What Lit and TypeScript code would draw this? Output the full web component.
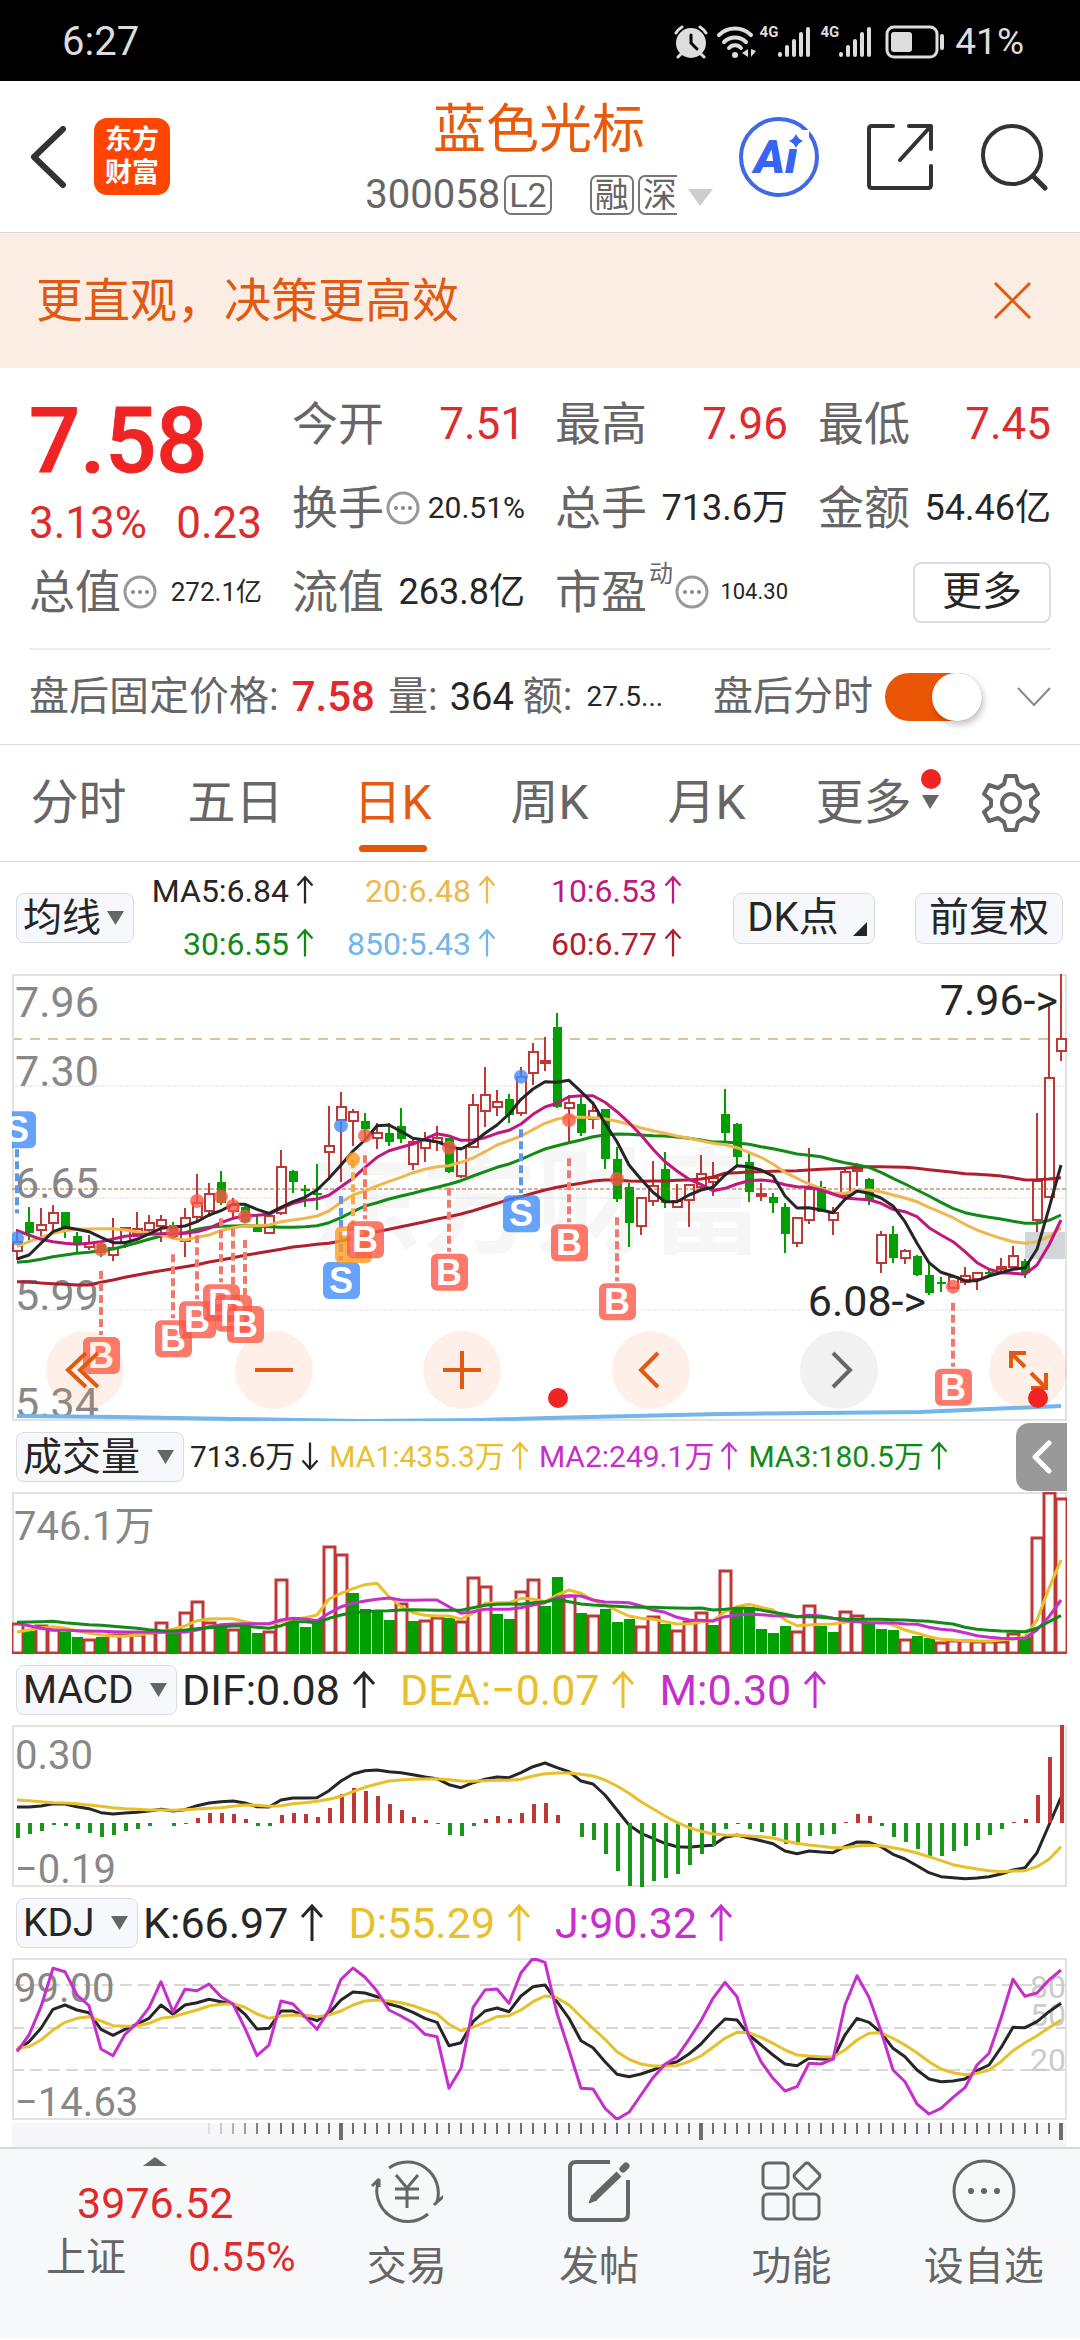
import { LitElement, html, svg, css } from "lit";
import { customElement, property, state } from "lit/decorators.js";

/* ---------- market data, one entry per trading day ---------- */
/* Values are kept in thirds of a drawing unit, counted down from each panel's origin. */

type Candle = [string, number, number, number, number];

const CANDLES: Candle[] = (
  "r 808 845 873 900|g 740 787 820 840|r 745 795 809 830|r 735 759 790 815|g 755 755 802 835|g 815 827 852 875|" +
  "r 825 850 862 870|g 845 852 880 890|r 775 865 885 902|r 803 805 845 865|r 755 807 818 830|r 765 790 810 825|" +
  "r 765 779 797 845|g 785 795 832 835|r 745 773 843 892|r 643 730 770 790|r 668 703 752 772|g 632 667 728 735|" +
  "r 715 735 752 775|g 735 740 785 790|g 765 795 815 815|r 765 768 818 822|r 570 620 760 765|g 630 633 665 700|" +
  "g 675 688 694 740|g 612 700 706 750|r 437 559 577 660|r 396 440 480 665|r 448 456 484 558|g 458 484 508 540|" +
  "r 490 518 534 568|g 490 518 547 558|g 443 498 538 548|r 535 545 612 630|r 515 540 563 605|r 498 535 545 573|" +
  "g 533 533 635 640|r 560 565 648 655|r 402 436 560 560|r 320 405 453 502|r 390 427 440 467|g 402 416 465 490|" +
  "r 320 350 458 467|r 248 277 340 375|r 232 303 310 333|g 160 200 440 445|r 405 430 443 550|g 412 432 518 527|" +
  "r 432 453 478 507|g 448 448 598 626|g 562 597 717 727|g 670 680 790 860|r 712 714 797 825|r 602 678 723 738|" +
  "g 575 627 730 743|r 672 724 740 740|r 672 676 719 800|r 585 641 680 690|r 605 653 667 708|g 387 462 518 543|" +
  "g 490 492 590 615|g 572 605 697 727|r 670 703 709 722|g 700 710 728 758|g 730 740 822 878|r 770 773 850 860|" +
  "r 565 688 780 793|g 663 682 755 757|r 740 760 780 825|r 620 635 705 715|r 608 626 632 678|g 653 658 722 735|" +
  "r 812 825 910 938|g 797 822 893 908|r 868 872 895 912|g 885 888 944 948|g 912 945 1000 1005|g 950 966 972 995|" +
  "r 945 952 983 985|r 920 949 965 975|r 935 939 958 990|g 925 935 941 950|r 893 921 927 935|r 858 887 922 925|" +
  "g 898 903 940 953|r 458 662 780 815|r 135 354 710 712|r 42 237 273 302"
)
  .split("|")
  .map((row) => {
    const [kind, ...v] = row.split(" ");
    return [kind, ...v.map((n) => Math.round(Number(n) / 3))] as Candle;
  });

const MA5 = [897, 885, 850, 815, 802, 808, 815, 832, 848, 848, 838, 822, 805, 802, 798, 785, 765, 752, 733, 733, 748, 760, 742, 725, 712, 690, 655, 615, 573, 540, 497, 495, 514, 535, 540, 545, 560, 567, 548, 520, 495, 462, 418, 387, 365, 367, 361, 395, 430, 490, 545, 615, 658, 697, 725, 725, 705, 690, 682, 645, 617, 620, 630, 648, 708, 744, 743, 750, 758, 718, 693, 700, 714, 738, 785, 850, 908, 937, 948, 962, 962, 948, 938, 928, 923, 868, 745, 615];
const MA10 = [812, 825, 838, 845, 850, 853, 850, 845, 837, 829, 826, 823, 821, 820, 820, 815, 805, 788, 775, 768, 766, 763, 745, 730, 721, 717, 706, 680, 655, 622, 592, 572, 562, 552, 537, 521, 528, 541, 540, 533, 520, 511, 492, 463, 441, 430, 410, 407, 407, 427, 455, 488, 525, 568, 605, 633, 658, 673, 692, 685, 672, 662, 660, 664, 674, 680, 682, 690, 702, 714, 717, 719, 730, 748, 755, 770, 803, 825, 845, 875, 908, 928, 938, 940, 943, 915, 855, 780];
const MA20 = [860, 845, 832, 820, 812, 808, 807, 806, 806, 810, 815, 820, 824, 835, 840, 832, 825, 812, 803, 798, 797, 795, 785, 780, 775, 768, 753, 727, 705, 693, 678, 664, 652, 638, 628, 620, 617, 607, 594, 575, 555, 542, 528, 509, 490, 477, 471, 472, 473, 476, 484, 493, 504, 512, 520, 528, 535, 542, 550, 554, 563, 577, 592, 612, 637, 655, 672, 685, 700, 700, 693, 690, 695, 705, 714, 725, 742, 757, 773, 793, 810, 823, 835, 845, 850, 845, 830, 803];
const MA30 = [907, 904, 898, 890, 885, 880, 877, 872, 867, 858, 848, 838, 828, 824, 818, 808, 802, 799, 798, 797, 798, 800, 802, 802, 800, 797, 788, 773, 755, 738, 728, 717, 708, 700, 690, 682, 673, 662, 648, 635, 622, 612, 598, 582, 567, 557, 548, 540, 530, 525, 522, 523, 525, 527, 528, 531, 535, 540, 546, 546, 549, 553, 560, 566, 574, 582, 586, 590, 600, 608, 615, 622, 637, 655, 672, 690, 708, 727, 745, 758, 766, 772, 777, 784, 790, 790, 781, 765];
const MA60 = [965, 966, 969, 971, 973, 975, 975, 967, 960, 952, 945, 938, 932, 926, 920, 914, 906, 900, 893, 886, 880, 874, 868, 861, 857, 853, 850, 843, 833, 822, 815, 808, 800, 793, 785, 777, 770, 762, 752, 741, 730, 718, 710, 700, 690, 682, 676, 670, 663, 660, 660, 663, 664, 663, 663, 661, 660, 657, 651, 640, 638, 636, 635, 634, 633, 632, 630, 628, 626, 625, 622, 620, 620, 621, 622, 625, 629, 633, 637, 641, 643, 645, 648, 653, 660, 659, 657, 653];

const VOLUME =
  "r613 g632 r617 r630 g635 g650 r661 g650 r645 r645 r645 r640 r609 g635 r578 r546 r610 g618 r630 g622 g638 r637 " +
  "r481 g603 g622 g597 r381 r405 g520 g568 g570 g600 r552 g602 r604 r595 g593 r606 r474 r500 g582 g597 r516 r481 " +
  "g557 g472 r527 g580 r587 g567 g606 g598 r622 r592 g612 r633 r605 r579 g615 r454 g560 g562 g628 g640 g617 r636 " +
  "r559 g617 g637 r576 r588 g613 g627 g630 r661 g648 g654 r669 r664 r664 r667 r667 r665 r641 g650 r354 r219 r238";

const VMA1 = [636, 630, 624, 620, 624, 632, 640, 645, 648, 649, 645, 640, 635, 628, 618, 602, 597, 596, 596, 605, 612, 612, 605, 598, 593, 585, 537, 520, 506, 494, 490, 530, 560, 578, 586, 588, 588, 597, 580, 550, 548, 548, 535, 537, 545, 525, 510, 520, 540, 555, 572, 588, 595, 597, 605, 612, 612, 606, 602, 575, 560, 553, 562, 570, 600, 617, 615, 613, 612, 607, 600, 605, 603, 615, 630, 640, 650, 658, 660, 662, 663, 664, 660, 657, 650, 600, 505, 420];
const VMA2 = [610, 617, 625, 630, 631, 632, 633, 634, 635, 636, 636, 637, 637, 637, 636, 630, 620, 614, 612, 611, 611, 611, 600, 595, 597, 602, 580, 560, 550, 543, 538, 534, 540, 541, 540, 540, 560, 580, 575, 568, 568, 568, 563, 555, 548, 532, 528, 528, 540, 546, 547, 548, 558, 570, 577, 592, 600, 601, 603, 590, 585, 583, 584, 587, 588, 590, 586, 588, 595, 602, 605, 608, 609, 608, 612, 613, 622, 628, 631, 638, 647, 652, 655, 656, 655, 630, 590, 540];
const VMA3 = [607, 606, 605, 604, 608, 611, 614, 616, 619, 622, 625, 629, 632, 633, 630, 626, 623, 620, 618, 618, 622, 625, 617, 605, 605, 608, 595, 585, 578, 575, 573, 572, 570, 569, 570, 571, 571, 571, 563, 556, 553, 552, 553, 548, 545, 538, 545, 552, 555, 557, 559, 561, 562, 562, 563, 564, 565, 564, 570, 568, 565, 565, 570, 577, 583, 590, 590, 592, 595, 597, 598, 598, 598, 599, 600, 602, 604, 608, 612, 622, 628, 631, 633, 634, 635, 625, 605, 587];

const MACD = [415, 403, 392, 374, 377, 388, 398, 410, 404, 392, 386, 377, 370, 377, 372, 355, 340, 340, 343, 358, 377, 377, 346, 340, 343, 351, 325, 283, 265, 274, 289, 313, 331, 351, 361, 372, 404, 407, 377, 358, 349, 358, 340, 313, 310, 346, 370, 410, 419, 461, 512, 558, 560, 542, 533, 521, 494, 461, 437, 386, 372, 386, 395, 407, 431, 434, 407, 404, 401, 367, 343, 349, 377, 410, 425, 446, 467, 467, 452, 437, 419, 404, 386, 365, 358, 286, 170, 75];
const DIF = [321, 321, 318, 311, 312, 320, 326, 338, 342, 339, 337, 333, 328, 333, 329, 317, 309, 305, 303, 309, 320, 321, 300, 294, 294, 293, 272, 243, 222, 212, 210, 215, 218, 224, 231, 236, 254, 263, 248, 238, 231, 233, 218, 200, 189, 203, 215, 243, 252, 285, 330, 375, 400, 415, 430, 440, 442, 438, 436, 412, 405, 414, 422, 431, 453, 461, 453, 456, 458, 440, 426, 427, 440, 463, 477, 497, 518, 530, 533, 536, 534, 530, 522, 510, 503, 458, 375, 292];
const DEA = [300, 302, 305, 308, 309, 311, 315, 319, 323, 326, 328, 330, 330, 331, 329, 327, 325, 323, 319, 315, 316, 319, 317, 311, 308, 304, 298, 289, 275, 262, 252, 243, 240, 238, 237, 236, 239, 243, 244, 242, 241, 241, 238, 228, 221, 219, 219, 223, 228, 240, 258, 280, 305, 326, 348, 367, 383, 394, 402, 405, 406, 408, 410, 414, 423, 430, 435, 439, 443, 443, 438, 436, 437, 443, 450, 459, 470, 482, 494, 501, 507, 512, 515, 513, 512, 500, 478, 440];

const J = [1055, 1005, 920, 805, 815, 885, 917, 1047, 1067, 1003, 970, 923, 845, 935, 868, 872, 852, 890, 912, 985, 1067, 1035, 903, 912, 950, 988, 930, 838, 804, 832, 873, 930, 948, 968, 1003, 1010, 1165, 1105, 923, 870, 867, 910, 818, 775, 787, 940, 1050, 1165, 1167, 1225, 1258, 1237, 1185, 1133, 1093, 1070, 1018, 962, 895, 847, 890, 1010, 1085, 1135, 1173, 1160, 1090, 1092, 1077, 915, 827, 892, 993, 1110, 1145, 1212, 1242, 1225, 1192, 1163, 1095, 1060, 955, 838, 889, 879, 840, 810];
const K = [1050, 1025, 985, 928, 915, 930, 938, 988, 1006, 988, 972, 955, 915, 943, 915, 908, 898, 905, 912, 943, 987, 985, 933, 933, 950, 962, 940, 900, 876, 879, 890, 912, 922, 937, 955, 967, 1037, 1028, 965, 933, 924, 935, 888, 860, 855, 905, 955, 1022, 1043, 1085, 1123, 1130, 1122, 1110, 1095, 1085, 1062, 1032, 992, 957, 960, 1005, 1035, 1065, 1092, 1097, 1075, 1077, 1077, 1005, 955, 967, 998, 1045, 1070, 1110, 1137, 1145, 1143, 1137, 1112, 1095, 1043, 982, 983, 965, 935, 910];
const D = [1043, 1040, 1020, 990, 967, 955, 950, 963, 977, 979, 978, 970, 955, 950, 940, 930, 918, 913, 911, 922, 942, 955, 948, 945, 946, 950, 945, 933, 915, 903, 900, 903, 908, 917, 930, 942, 973, 992, 982, 966, 950, 947, 930, 905, 888, 893, 915, 950, 985, 1018, 1055, 1078, 1092, 1098, 1098, 1097, 1085, 1068, 1042, 1015, 997, 998, 1012, 1030, 1050, 1065, 1068, 1070, 1071, 1050, 1020, 1000, 998, 1015, 1035, 1058, 1085, 1107, 1118, 1124, 1120, 1110, 1085, 1052, 1028, 1007, 983, 960];

/* Trade signals: kind, day index, dot level, badge level. */
const SIGNALS: [string, number, number, number][] = [
  ["S", 0, 835, 508], ["B", 7, 868, 1185], ["B", 13, 815, 1135], ["B", 15, 723, 1078],
  ["B", 17, 710, 1027], ["B", 18, 738, 1058], ["B", 19, 770, 1092], ["S", 27, 497, 960],
  ["T", 28, 598, 853], ["B", 29, 527, 838], ["B", 36, 563, 935], ["S", 42, 350, 760],
  ["B", 46, 480, 847], ["B", 50, 657, 1024], ["B", 78, 980, 1280],
];

const RED = "#c03835";
const GREEN = "#00a000";
const dayX = (i: number) => 17 + 12 * i;
const line = (values: number[], color: string, width = 3) =>
  svg`<polyline fill="none" stroke=${color} stroke-width=${width} stroke-linejoin="round"
    points=${values.map((v, i) => `${dayX(i)},${(v / 3).toFixed(1)}`).join(" ")} />`;
const frame = (top: number, height: number) =>
  svg`<rect x="13" y=${top + 1} width="1053" height=${height - 2} fill="none" stroke="#e2e2e2" stroke-width="2" />`;

/* ---------- charts ---------- */

abstract class ChartBase extends LitElement {
  static styles = css`
    :host { display: block; }
    svg { display: block; width: 100%; height: auto; }
    text { font-family: Roboto, "Noto Sans CJK SC", sans-serif; }
    .axis { fill: #888; font-size: 43px; }
    .axis-small { fill: #888; font-size: 40px; }
    .level { fill: #ccc; font-size: 32px; }
    .extreme { fill: #262626; font-size: 43px; }
    .badge { fill: #fff; font-size: 36px; font-weight: 700; font-family: "Liberation Sans", sans-serif; }
    .mark { fill: #f6f6f6; font-size: 114px; font-weight: 700; }
  `;
}

@customElement("price-chart")
export class PriceChart extends ChartBase {
  private candle([kind, high, top, bottom, low]: Candle, i: number) {
    const x = dayX(i);
    const c = kind === "r" ? RED : GREEN;
    const height = Math.max(2, bottom - top);
    if (kind === "g")
      return svg`<path d=${`M${x} ${high}V${low}`} stroke=${c} stroke-width="2" />
        <rect x=${x - 4} y=${top} width="9" height=${height} fill=${c} />`;
    return svg`<path d=${`M${x} ${high}V${top}M${x} ${bottom}V${low}`} stroke=${c} stroke-width="2" />
      <rect x=${x - 4} y=${top} width="9" height=${height} fill="none" stroke=${c} stroke-width="2" />`;
  }

  private signal([kind, day, dot, badge]: [string, number, number, number]) {
    const x = dayX(day);
    const by = badge / 3;
    const c = kind === "B" ? "#fb5846" : kind === "S" ? "#3f8cfb" : "#ff9a1f";
    const dashColor = kind === "B" ? "#ef7b6f" : kind === "S" ? "#5b9ae8" : "#f2ad50";
    const below = badge > dot;
    const from = below ? by - 84 : by + 20;
    return svg`<path d=${`M${x} ${from}v64`} stroke=${dashColor} stroke-width="4" stroke-dasharray="8 4" />
      <circle cx=${x} cy=${dot / 3} r="7" fill=${c} opacity="0.8" />
      <rect x=${x - 18} y=${by - 18} width="37" height="37" rx="6" fill=${c} opacity="0.8" />
      <text class="badge" x=${x} y=${by + 13} text-anchor="middle">${kind}</text>`;
  }

  render() {
    return html`<svg viewBox="12 14 1055 447" role="img" aria-label="日K线图">
      <text class="mark" x="308" y="284">东方财富</text>
      <rect x="1025" y="272" width="42" height="27" fill="#d2d5da" />
      <path d="M12 126H1067M12 238H1067M12 350H1067" stroke="#ddd" stroke-width="1" stroke-dasharray="2 1" />
      <path d="M12 79H1067" stroke="#e2c19a" stroke-width="2" stroke-dasharray="10 8" />
      ${frame(14, 447)}
      ${[["7.96", 57], ["7.30", 126], ["6.65", 238], ["5.99", 350], ["5.34", 458]].map(
        ([t, y]) => svg`<text class="axis" x="15" y=${y}>${t}</text>`,
      )}
      ${CANDLES.map((c, i) => this.candle(c, i))}
      <path d="M12 229H1067" stroke="#b0622c" stroke-width="1" stroke-dasharray="4 2" />
      ${line(MA60, "#b0202c")} ${line(MA30, "#128a17")} ${line(MA20, "#efb84e")}
      ${line(MA10, "#c0187e")} ${line(MA5, "#262626")}
      <polyline fill="none" stroke="#72b6ea" stroke-width="4"
        points="17,456 117,457 233,459 360,461 480,460 547,458 720,454 920,452 1061,446" />
      ${SIGNALS.map((s) => this.signal(s))}
      <text class="extreme" x="1058" y="55" text-anchor="end">7.96-&gt;</text>
      <text class="extreme" x="926" y="356" text-anchor="end">6.08-&gt;</text>
    </svg>`;
  }
}

@customElement("volume-chart")
export class VolumeChart extends ChartBase {
  render() {
    return html`<svg viewBox="12 72 1055 162" role="img" aria-label="成交量图">
      ${frame(72, 162)}
      <text class="axis-small" x="14" y="120">746.1万</text>
      ${VOLUME.split(" ").map((bar, i) => {
        const y = Math.round(Number(bar.slice(1)) / 3);
        return bar[0] === "r"
          ? svg`<rect x=${dayX(i) - 5} y=${y} width="11" height=${233 - y} fill="#fff" stroke=${RED} stroke-width="3" />`
          : svg`<rect x=${dayX(i) - 5} y=${y} width="11" height=${234 - y} fill=${GREEN} />`;
      })}
      ${line(VMA1, "#e8c02c")} ${line(VMA2, "#c62fcb")} ${line(VMA3, "#128a17")}
    </svg>`;
  }
}

@customElement("macd-chart")
export class MacdChart extends ChartBase {
  render() {
    return html`<svg viewBox="12 25 1055 162" role="img" aria-label="MACD图">
      ${frame(25, 162)}
      <text class="axis-small" x="15" y="69">0.30</text>
      <text class="axis-small" x="15" y="183">−0.19</text>
      ${line(DIF, "#262626")}
      ${MACD.map((v, i) => svg`<path d=${`M${dayX(i) + 1} 123V${Math.round(v / 3)}`} stroke-width="4"
        stroke=${v < 370 ? RED : "#1a971a"} />`)}
      ${line(DEA, "#e8c02c")}
    </svg>`;
  }
}

@customElement("kdj-chart")
export class KdjChart extends ChartBase {
  render() {
    return html`<svg viewBox="12 258 1055 162" role="img" aria-label="KDJ图">
      <path d="M12 285H1067M12 328H1067M12 370H1067" stroke="#d8d8d8" stroke-width="2" stroke-dasharray="12 6" />
      ${frame(258, 162)}
      <text class="axis-small" x="14" y="302">99.00</text>
      <text class="axis-small" x="15" y="416">−14.63</text>
      <text class="level" x="1066" y="298" text-anchor="end">80</text>
      <text class="level" x="1066" y="326" text-anchor="end">50</text>
      <text class="level" x="1066" y="371" text-anchor="end">20</text>
      ${line(K, "#262626")} ${line(D, "#e8c02c")} ${line(J, "#c62fcb")}
    </svg>`;
  }
}

@customElement("day-ruler")
export class DayRuler extends ChartBase {
  render() {
    return html`<svg viewBox="12 0 1055 24" aria-hidden="true">
      ${CANDLES.map((_, i) => {
        if (i < 16) return null;
        const major = i % 30 === 27;
        return svg`<path d=${`M${dayX(i)} 0v${major ? 17 : 11}`} stroke="#6e6e6e"
          stroke-width=${major ? 4 : 2} opacity=${Math.min(1, (i - 15) / 6)} />`;
      })}
    </svg>`;
  }
}

/* ---------- small shared parts ---------- */

@customElement("pick-menu")
export class PickMenu extends LitElement {
  @property() value = "";
  @property() label = "";
  @property({ type: Boolean, reflect: true }) tight = false;

  static styles = css`
    :host { display: block; flex: none; }
    .box { display: flex; position: relative; align-items: center; }
    select {
      appearance: none; height: 50px; margin: 0; padding: 0 42px 0 6px;
      border: 1px solid #d9dce0; border-radius: 8px; background: #f6f8fb; color: #262626;
      font: 39px/48px Roboto, "Noto Sans CJK SC", sans-serif;
    }
    :host([tight]) select { padding-right: 31px; }
    svg { position: absolute; right: 10px; width: 17px; height: 14px; pointer-events: none; }
  `;

  render() {
    return html`<label class="box">
      <select aria-label=${this.label}><option>${this.value}</option></select>
      <svg viewBox="0 0 17 14"><path d="M0 0h17l-8.500 14z" fill="#666" /></svg>
    </label>`;
  }
}

const moreDots = html`<svg class="dots" viewBox="0 0 34 34">
  <circle cx="17" cy="17" r="15" fill="none" stroke="#999" stroke-width="3" />
  <circle cx="10" cy="17" r="2" fill="#888" /><circle cx="17" cy="17" r="2" fill="#888" /><circle cx="24" cy="17" r="2" fill="#888" />
</svg>`;

const signalBars = html`<svg class="bars" viewBox="0 0 34 32">
  <path d="M2 28v1M9 21v8M16 15v14M23 8v21M30 3v26" stroke="#ddd" stroke-width="4" stroke-linecap="round" />
</svg>`;

/* ---------- page ---------- */

@customElement("app-root")
export class AppRoot extends LitElement {
  @state() private tab = "日K";
  @state() private bannerOpen = true;

  static styles = css`
    :host { display: block; background: #fff; color: #262626; font-family: Roboto, "Noto Sans CJK SC", sans-serif; }
    * { box-sizing: border-box; }
    button { margin: 0; padding: 0; border: 0; background: none; color: inherit; font: inherit; cursor: pointer; }
    a { color: inherit; text-decoration: none; }
    svg { display: block; flex: none; }
    dl, dd, dt, h1, p { margin: 0; font-weight: 400; }
    .red { color: #de2c2e; }

    .status { display: flex; align-items: center; height: 81px; padding: 3px 56px 0 62px; background: #000; color: #ddd; }
    .time { flex: 1; font-size: 40px; line-height: 50px; }
    .status-icons { display: flex; align-items: center; }
    .alarm { width: 34px; height: 34px; margin-right: 8px; }
    .wifi { width: 40px; height: 34px; margin-right: 4px; }
    .net { align-self: flex-start; margin-top: 6px; font-size: 15px; line-height: 18px; font-weight: 700; }
    .bars { width: 34px; height: 32px; margin-right: 8px; }
    .battery { width: 60px; height: 34px; margin: 0 10px 0 4px; }
    .percent { font-size: 37px; line-height: 50px; }

    .header { display: grid; grid-template-columns: 1fr auto 1fr; align-items: center; height: 152px; padding: 0 32px 0 30px; border-bottom: 1px solid #d6d6d8; }
    .lead { display: flex; align-items: center; gap: 28px; }
    .back { width: 36px; height: 62px; }
    .logo { display: flex; flex-direction: column; align-items: center; justify-content: center; width: 76px; height: 77px; border-radius: 13px; background: #ff4500; color: #fff; font-size: 27px; line-height: 33px; font-weight: 700; }
    .title { display: flex; flex-direction: column; align-items: center; padding-top: 7px; }
    .name { color: #e85a0c; font-size: 53px; line-height: 70px; }
    .code { display: flex; align-items: center; height: 60px; color: #666; font-size: 40px; line-height: 60px; }
    .tag { height: 40px; margin-left: 4px; padding: 0 3px; border: 2px solid #777; border-radius: 7px; font-size: 34px; line-height: 36px; }
    .tag-gap { margin-left: 38px; }
    .tag-open { border-right: 0; border-radius: 7px 0 0 7px; padding-right: 0; }
    .caret { width: 25px; height: 17px; margin: 4px 0 0 11px; }
    .tools { display: flex; align-items: center; justify-content: flex-end; gap: 46px; }
    .ai { width: 82px; height: 82px; }
    .tool { width: 68px; height: 68px; }
    .ai-text { font: italic 900 47px Roboto, sans-serif; fill: #3565f2; }

    .banner { display: flex; align-items: center; justify-content: space-between; height: 135px; padding: 0 48px 0 36px; background: #fcede4; color: #df5a12; font-size: 47px; line-height: 60px; }
    .close { width: 39px; height: 39px; }

    .quote { padding: 14px 29px 0; border-bottom: 1px solid #dcdcdc; }
    .grid { display: grid; grid-template-columns: repeat(4, 1fr); grid-template-rows: repeat(3, 84px); column-gap: 30px; align-items: center; }
    .headline { grid-row: span 2; display: flex; flex-direction: column; gap: 3px; align-self: stretch; padding-top: 12px; }
    .price { color: #f02424; font-size: 90px; line-height: 96px; font-weight: 500; -webkit-text-stroke: 1px #f02424; }
    .change { display: flex; justify-content: space-between; font-size: 44px; line-height: 60px; }
    .stat { display: flex; align-items: center; justify-content: space-between; color: #666; font-size: 46px; line-height: 60px; white-space: nowrap; }
    .stat dt { display: flex; align-items: center; gap: 2px; }
    .stat dd { font-size: 44px; color: #262626; }
    .stat dd.red { color: #de2c2e; }
    .stat dd.v36 { font-size: 36px; }
    .stat dd.v30 { font-size: 30px; }
    .stat dd.v26 { font-size: 26px; }
    .stat dd.v22 { font-size: 22px; }
    .dots { width: 34px; height: 34px; }
    .sup { align-self: flex-start; font-size: 24px; line-height: 24px; }
    .more { justify-self: end; width: 138px; height: 61px; border: 2px solid #ddd; border-radius: 8px; font-size: 40px; line-height: 56px; }
    .after { display: flex; align-items: center; height: 96px; margin-top: 14px; border-top: 2px solid #eee; color: #666; font-size: 40px; line-height: 60px; white-space: nowrap; }
    .after b { font-weight: 500; font-size: 42px; margin: 0 13px; }
    .after .qty { font-size: 38px; font-weight: 400; color: #262626; margin: 0 9px 0 12px; }
    .after .amt { flex: 1; font-size: 28px; color: #262626; margin-left: 14px; }
    .switch { display: flex; align-items: center; gap: 12px; }
    .switch input { appearance: none; display: flex; justify-content: flex-end; width: 97px; height: 48px; margin: 0; border-radius: 24px; background: #e95504; }
    .switch input::before { content: ""; width: 50px; height: 48px; border-radius: 24px; background: #fff; box-shadow: 2px 4px 6px rgb(0 0 0 / 22%); }
    .switch input:not(:checked) { justify-content: flex-start; background: #ccc; }
    .expand { width: 34px; height: 20px; margin-left: 35px; }

    .tabs { display: grid; grid-template-columns: repeat(6, 157fr) 138fr; height: 117px; border-bottom: 1px solid #d6d6d6; color: #666; font-size: 48px; line-height: 60px; }
    .tab { position: relative; display: flex; align-items: center; justify-content: center; }
    .tab.on { color: #e35a10; }
    .tab.on::after { content: ""; position: absolute; bottom: 9px; width: 68px; height: 7px; border-radius: 4px; background: #e65608; }
    .tab-caret { position: absolute; right: 3px; top: 50px; width: 17px; height: 14px; }
    .new { position: absolute; width: 20px; height: 20px; border-radius: 10px; background: #f02424; }
    .tab .new { right: 1px; top: 24px; }
    .gear { width: 60px; height: 60px; }

    .panel { padding: 0 13px 0 12px; }
    .averages { display: flex; align-items: center; height: 112px; padding: 0 4px; }
    .ma { flex: none; display: grid; grid-template-columns: 162px 182px 186px; justify-items: end; margin: 0 auto 0 19px; font-size: 32px; line-height: 53px; }
    .ma span, .values span { white-space: nowrap; }
    .ma .up { width: 20px; height: 30px; margin-left: 6px; vertical-align: -3px; }
    .up { display: inline-block; }
    .chip { position: relative; height: 51px; border: 1px solid #d9dce0; border-radius: 8px; background: #f6f8fb; font-size: 40px; line-height: 48px; }
    .dk { width: 142px; padding-right: 22px; margin-right: 40px; }
    .dk svg { position: absolute; right: 7px; bottom: 7px; width: 14px; height: 14px; }
    .adjust { width: 148px; }

    .stage { position: relative; }
    .controls { position: absolute; left: 34px; right: 0; bottom: 12px; display: flex; justify-content: space-between; }
    .round { position: relative; width: 78px; height: 78px; border-radius: 39px; background: rgb(248 136 80 / 13%); }
    .round.off { background: rgb(120 120 120 / 10%); }
    .round svg { width: 78px; height: 78px; }
    .hint-plus { left: 125px; top: 57px; }
    .hint-full { left: 39px; top: 57px; }

    .values { display: flex; align-items: center; gap: 24px; height: 71px; padding: 0 0 0 4px; }
    .values .first { margin-left: -19px; }
    .wide { font-size: 43px; line-height: 60px; }
    .wide .up { width: 24px; height: 40px; margin-left: 12px; vertical-align: -5px; }
    .narrow { gap: 10px; font-size: 30px; line-height: 60px; }
    .narrow .first { margin-left: -4px; }
    .narrow .up { width: 18px; height: 38px; margin-left: 6px; vertical-align: -8px; }
    .drawer { display: flex; align-items: center; justify-content: center; width: 51px; height: 68px; margin-left: auto; border-radius: 13px 0 0 13px; background: #999; }
    .drawer svg { width: 22px; height: 34px; }
    .black { color: #262626; } .yellow { color: #e8c02c; } .purple { color: #c62fcb; } .green { color: #128a17; }
    .amber { color: #efb84e; } .pink { color: #c0187e; } .sky { color: #72b6ea; } .wine { color: #b0202c; }
    .ruler { margin-top: 3px; background: #f7f7fa; }

    .footer { display: grid; grid-template-columns: 310fr repeat(4, 192fr); min-height: 192px; border-top: 2px solid #d6d9dc; background: #f6f8fa; color: #666; }
    .index { display: flex; flex-direction: column; align-items: center; padding-top: 8px; }
    .index svg { width: 24px; height: 9px; }
    .points { font-size: 43px; line-height: 56px; margin-top: 9px; }
    .row { display: flex; align-items: center; justify-content: space-between; align-self: stretch; padding: 0 15px 0 46px; font-size: 40px; line-height: 54px; }
    .nav { display: flex; flex-direction: column; align-items: center; padding-top: 6px; font-size: 40px; line-height: 56px; gap: 12px; }
    .nav svg { width: 72px; height: 72px; }
  `;

  private up(down = false) {
    return html`<svg class="up" viewBox="0 0 24 40" role="img" aria-label=${down ? "下降" : "上升"}>
      <path d=${down ? "M12 2v35M2 26l10 11 10-11" : "M12 38V3M2 14L12 3l10 11"} fill="none" stroke="currentColor" stroke-width="3" />
    </svg>`;
  }

  private stat(name: string, value: string, cls: string, dots = false, sup = "") {
    return html`<div class="stat">
      <dt>${name}${sup ? html`<span class="sup">${sup}</span>` : null}${dots ? moreDots : null}</dt>
      <dd class=${cls}>${value}</dd>
    </div>`;
  }

  private round(label: string, path: string, extra: unknown = null, off = false) {
    return html`<button class=${off ? "round off" : "round"} aria-label=${label}>
      <svg viewBox="0 0 78 78"><path d=${path} fill="none" stroke=${off ? "#666" : "#e05a12"} stroke-width="4" /></svg>${extra}
    </button>`;
  }

  private renderStatus() {
    return html`<div class="status">
      <span class="time">6:27</span>
      <div class="status-icons">
        <svg class="alarm" viewBox="0 0 34 34">
          <circle cx="17" cy="18" r="15" fill="#ddd" />
          <path d="M2 8a18 18 0 0 1 6-6M32 8a18 18 0 0 0-6-6M7 29l-3 3M27 29l3 3" stroke="#ddd" stroke-width="3" fill="none" stroke-linecap="round" />
          <path d="M17 10v8l6 6" stroke="#000" stroke-width="3" fill="none" stroke-linecap="round" />
        </svg>
        <svg class="wifi" viewBox="0 0 40 34">
          <path d="M3 10a23 23 0 0 1 32 0M8 17a16 16 0 0 1 22 0M13 23a8 8 0 0 1 12 0" stroke="#ddd" stroke-width="4" fill="none" stroke-linecap="round" />
          <circle cx="19" cy="30" r="3" fill="#ddd" />
          <path d="M32 24v8l-6-4zM35 24v8l5-6z" fill="#ddd" />
        </svg>
        <span class="net">4G</span>${signalBars}<span class="net">4G</span>${signalBars}
        <svg class="battery" viewBox="0 0 60 34">
          <rect x="2" y="2" width="50" height="30" rx="7" fill="none" stroke="#ddd" stroke-width="3" />
          <rect x="6" y="7" width="21" height="20" rx="3" fill="#ddd" />
          <path d="M57 11v12" stroke="#ddd" stroke-width="4" stroke-linecap="round" />
        </svg>
        <span class="percent">41%</span>
      </div>
    </div>`;
  }

  private renderHeader() {
    return html`<header class="header">
      <div class="lead">
        <button aria-label="返回"><svg class="back" viewBox="0 0 36 62"><path d="M33 3L4 31l29 28" fill="none" stroke="#333" stroke-width="6" stroke-linecap="round" stroke-linejoin="round" /></svg></button>
        <a class="logo" href="#home"><span>东方</span><span>财富</span></a>
      </div>
      <div class="title">
        <h1 class="name">蓝色光标</h1>
        <div class="code">300058<span class="tag">L2</span><span class="tag tag-gap">融</span><span class="tag tag-open">深</span>
          <svg class="caret" viewBox="0 0 25 17"><path d="M0 0h25L12 17z" fill="#ccc" /></svg></div>
      </div>
      <div class="tools">
        <button aria-label="智能助手"><svg class="ai" viewBox="0 0 82 82">
          <circle cx="41" cy="41" r="38" fill="none" stroke="#4069e4" stroke-width="4" />
          <text class="ai-text" x="16" y="57">Ai</text>
          <path d="M49 14h22v19H49z" fill="#fff" />
          <path d="M58 18q2 5 7 7q-5 2-7 7q-2-5-7-7q5-2 7-7z" fill="#3565f2" />
        </svg></button>
        <button aria-label="分享"><svg class="tool" viewBox="0 0 68 68" fill="none" stroke="#333" stroke-width="4" stroke-linecap="round" stroke-linejoin="round">
          <path d="M27 3H6q-3 0-3 3v56q0 3 3 3h56q3 0 3-3V43M43 3h22v23M65 3L34 37" />
        </svg></button>
        <button aria-label="搜索"><svg class="tool" viewBox="0 0 68 68" fill="none" stroke="#333" stroke-width="4" stroke-linecap="round">
          <circle cx="32" cy="32" r="29" /><path d="M53 53l12 12" stroke-width="5" />
        </svg></button>
      </div>
    </header>`;
  }

  private renderQuote() {
    return html`<section class="quote">
      <dl class="grid">
        <div class="headline">
          <p class="price">7.58</p>
          <p class="change red"><span>3.13%</span><span>0.23</span></p>
        </div>
        ${this.stat("今开", "7.51", "red")} ${this.stat("最高", "7.96", "red")} ${this.stat("最低", "7.45", "red")}
        ${this.stat("换手", "20.51%", "v30", true)} ${this.stat("总手", "713.6万", "v36")} ${this.stat("金额", "54.46亿", "v36")}
        ${this.stat("总值", "272.1亿", "v26", true)} ${this.stat("流值", "263.8亿", "v36")} ${this.stat("市盈", "104.30", "v22", true, "动")}
        <button class="more">更多</button>
      </dl>
      <div class="after">
        盘后固定价格:<b class="red">7.58</b>量:<span class="qty">364</span>额:<span class="amt">27.5...</span>
        <label class="switch">盘后分时<input type="checkbox" checked /></label>
        <button aria-label="展开"><svg class="expand" viewBox="0 0 34 20"><path d="M1 1l16 17L33 1" fill="none" stroke="#888" stroke-width="2" /></svg></button>
      </div>
    </section>`;
  }

  private renderTabs() {
    return html`<nav class="tabs">
      ${["分时", "五日", "日K", "周K", "月K"].map(
        (t) => html`<button class=${t === this.tab ? "tab on" : "tab"} @click=${() => (this.tab = t)}>${t}</button>`,
      )}
      <button class="tab">更多<svg class="tab-caret" viewBox="0 0 17 14"><path d="M0 0h17L8 14z" fill="#666" /></svg><span class="new"></span></button>
      <button class="tab" aria-label="设置"><svg class="gear" viewBox="0 0 60 60" fill="none" stroke="#666" stroke-width="4" stroke-linejoin="round">
        <path d="M25 3h10l2 8 6 4 9-3 5 9-7 6v6l7 6-5 9-9-3-6 4-2 8H25l-2-8-6-4-9 3-5-9 7-6v-6l-7-6 5-9 9 3 6-4z" /><circle cx="30" cy="30" r="9" />
      </svg></button>
    </nav>`;
  }

  private renderCharts() {
    return html`<main class="panel">
      <div class="averages">
        <pick-menu tight label="主图指标" value="均线"></pick-menu>
        <div class="ma">
          <span class="black">MA5:6.84${this.up()}</span><span class="amber">20:6.48${this.up()}</span><span class="pink">10:6.53${this.up()}</span>
          <span class="green">30:6.55${this.up()}</span><span class="sky">850:5.43${this.up()}</span><span class="wine">60:6.77${this.up()}</span>
        </div>
        <button class="chip dk">DK点<svg viewBox="0 0 14 14"><path d="M14 0v14H0z" fill="#262626" /></svg></button>
        <button class="chip adjust">前复权</button>
      </div>
      <div class="stage">
        <price-chart></price-chart>
        <div class="controls">
          ${this.round("最早", "M40 22L22 39l18 17M52 22L34 39l18 17")}
          ${this.round("缩小", "M20 39h38")}
          ${this.round("放大", "M20 39h38M39 20v38", html`<span class="new hint-plus"></span>`)}
          ${this.round("向左", "M46 22L29 39l17 17")}
          ${this.round("向右", "M33 22l17 17-17 17", null, true)}
          ${this.round("全屏", "M36 36L22 22M37 22H22v15M42 42l14 14M42 57h15V42", html`<span class="new hint-full"></span>`)}
        </div>
      </div>
      <div class="values narrow">
        <pick-menu label="副图一" value="成交量"></pick-menu>
        <span class="first black">713.6万${this.up(true)}</span><span class="yellow">MA1:435.3万${this.up()}</span>
        <span class="purple">MA2:249.1万${this.up()}</span><span class="green">MA3:180.5万${this.up()}</span>
        <button class="drawer" aria-label="展开侧栏"><svg viewBox="0 0 22 34"><path d="M18 3L4 17l14 14" fill="none" stroke="#fff" stroke-width="5" stroke-linecap="round" stroke-linejoin="round" /></svg></button>
      </div>
      <volume-chart></volume-chart>
      <div class="values wide">
        <pick-menu label="副图二" value="MACD"></pick-menu>
        <span class="first black">DIF:0.08${this.up()}</span><span class="yellow">DEA:−0.07${this.up()}</span><span class="purple">M:0.30${this.up()}</span>
      </div>
      <macd-chart></macd-chart>
      <div class="values wide">
        <pick-menu label="副图三" value="KDJ"></pick-menu>
        <span class="first black">K:66.97${this.up()}</span><span class="yellow">D:55.29${this.up()}</span><span class="purple">J:90.32${this.up()}</span>
      </div>
      <kdj-chart></kdj-chart>
      <day-ruler class="ruler"></day-ruler>
    </main>`;
  }

  private renderFooter() {
    return html`<footer class="footer">
      <a class="index" href="#index">
        <svg viewBox="0 0 24 9"><path d="M12 0l12 9H0z" fill="#666" /></svg>
        <span class="points red">3976.52</span>
        <span class="row"><span>上证</span><span class="red">0.55%</span></span>
      </a>
      <a class="nav" href="#trade"><svg viewBox="0 0 72 72" fill="none" stroke="#666" stroke-width="3">
        <path d="M18 13a31 31 0 0 1 48 34l-3 3M66 47l7-6M57 59A31 31 0 0 1 8 24l-7 7M8 24v8" /><path d="M25 20l11 13 11-13M24 34h24M24 43h24M36 33v20" />
      </svg>交易</a>
      <a class="nav" href="#post"><svg viewBox="0 0 72 72" fill="none" stroke="#666" stroke-width="4">
        <path d="M47 7H13q-6 0-6 6v46q0 6 6 6h46q6 0 6-6V25" /><path d="M56 19L31 43" stroke-width="7" /><path d="M26 48l8-3-5-5z" fill="#666" stroke-width="1" /><path d="M60 14l3-3" stroke-width="7" stroke-linecap="round" />
      </svg>发帖</a>
      <a class="nav" href="#tools"><svg viewBox="0 0 72 72" fill="none" stroke="#666" stroke-width="3">
        <rect x="8" y="8" width="25" height="25" rx="5" /><rect x="8" y="39" width="25" height="25" rx="5" /><rect x="39" y="39" width="25" height="25" rx="5" />
        <rect x="42" y="11" width="20" height="20" rx="3" transform="rotate(45 52 21)" />
      </svg>功能</a>
      <a class="nav" href="#watch"><svg viewBox="0 0 72 72">
        <circle cx="36" cy="36" r="30" fill="none" stroke="#666" stroke-width="3" />
        <circle cx="23" cy="36" r="3" fill="#666" /><circle cx="36" cy="36" r="3" fill="#666" /><circle cx="49" cy="36" r="3" fill="#666" />
      </svg>设自选</a>
    </footer>`;
  }

  render() {
    return html`
      ${this.renderStatus()} ${this.renderHeader()}
      ${this.bannerOpen
        ? html`<div class="banner"><span>更直观，决策更高效</span>
            <button aria-label="关闭" @click=${() => (this.bannerOpen = false)}><svg class="close" viewBox="0 0 39 39"><path d="M2 2l35 35M37 2L2 37" stroke="#df5a12" stroke-width="3" /></svg></button></div>`
        : null}
      ${this.renderQuote()} ${this.renderTabs()} ${this.renderCharts()} ${this.renderFooter()}
    `;
  }
}
